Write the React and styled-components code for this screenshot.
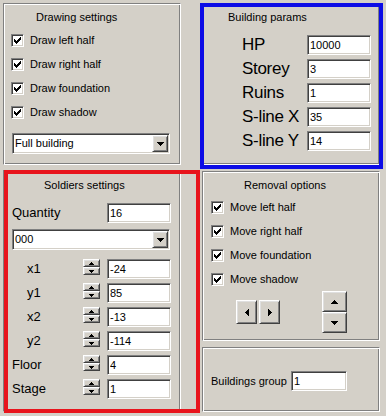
import styled, { createGlobalStyle } from "styled-components";

const GlobalStyle = createGlobalStyle`
  html, body {
    margin: 0;
    background: #d4d0c8;
  }
  body {
    font-family: "Liberation Sans", Arial, sans-serif;
    font-size: 11px;
    color: #000;
  }
`;

// pixel check mark, 7x7 like the classic one
const checkCols = [[0, 2], [1, 3], [2, 4], [3, 3], [4, 2], [5, 1], [6, 0]];

const CheckMark = () => (
  <svg width="7" height="7" viewBox="0 0 7 7" shapeRendering="crispEdges">
    <path d={checkCols.map(([x, y]) => `M${x} ${y}h1v3h-1z`).join("")} fill="#000" />
  </svg>
);

const Arrow = ({ size = 7, dir = "down" }) => {
  const rows = (size + 1) / 2;
  const vertical = dir === "up" || dir === "down";
  const d = Array.from({ length: rows }, (_, i) => {
    const len = size - 2 * i;
    if (dir === "down") return `M${i} ${i}h${len}v1h-${len}z`;
    if (dir === "up") return `M${i} ${rows - 1 - i}h${len}v1h-${len}z`;
    if (dir === "right") return `M${i} ${i}v${len}h1v-${len}z`;
    return `M${rows - 1 - i} ${i}v${len}h1v-${len}z`;
  }).join("");
  const w = vertical ? size : rows;
  const h = vertical ? rows : size;
  return (
    <svg width={w} height={h} viewBox={`0 0 ${w} ${h}`} shapeRendering="crispEdges">
      <path d={d} fill="#000" />
    </svg>
  );
};

const Window = styled.div`
  width: 386px;
  height: 416px;
  box-sizing: border-box;
  padding: 3px 0 0 3px;
  display: grid;
  grid-template-columns: 178px 178px;
  column-gap: 21px;
  align-items: start;
  overflow: hidden;
`;

const Column = styled.div`
  display: flex;
  flex-direction: column;
  gap: ${(p) => p.$gap}px;
`;

const Panel = styled.div`
  position: relative;
  box-sizing: border-box;
  height: ${(p) => p.$h}px;
  border: 1px solid;
  border-color: #808080 #fff #fff #808080;
  box-shadow: inset 1px 1px #fff, inset -1px -1px #808080;
  padding: ${(p) => p.$top}px 0 0 8px;
  display: flex;
  flex-direction: column;
  align-items: flex-start;
`;

const Highlight = styled.div`
  position: absolute;
  pointer-events: none;
  box-sizing: border-box;
  left: ${(p) => p.$x}px;
  top: ${(p) => p.$y}px;
  width: ${(p) => p.$w}px;
  height: ${(p) => p.$h}px;
  border: 4px solid ${(p) => p.$color};
`;

const Title = styled.div`
  margin-left: ${(p) => p.$x - 9}px;
  font-size: 11px;
  line-height: 13px;
  white-space: nowrap;
`;

const CheckList = styled.div`
  margin-top: ${(p) => p.$mt}px;
  margin-left: ${(p) => p.$ml}px;
  display: flex;
  flex-direction: column;
  gap: 11px;
`;

const CheckRow = styled.label`
  display: flex;
  align-items: center;
  gap: 6px;
  height: 13px;
  line-height: 13px;
  white-space: nowrap;

  span {
    position: relative;
    top: -1px;
  }
`;

const CheckBox = styled.span`
  box-sizing: border-box;
  width: 13px;
  height: 13px;
  flex: none;
  background: #fff;
  border: 1px solid;
  border-color: #808080 #fff #fff #808080;
  box-shadow: inset 1px 1px #404040, inset -1px -1px #d4d0c8;
  display: flex;
  align-items: center;
  justify-content: center;
`;

const Combo = styled.div`
  margin-top: ${(p) => p.$mt}px;
  box-sizing: border-box;
  width: 158px;
  height: 21px;
  padding: 1px;
  background: #fff;
  border: 1px solid;
  border-color: #808080 #fff #fff #808080;
  box-shadow: inset 1px 1px #404040, inset -1px -1px #d4d0c8;
  display: flex;
`;

const ComboText = styled.div`
  flex: 1;
  padding-left: 1px;
  line-height: 17px;
  font-size: 11px;
`;

const RaisedButton = styled.div`
  box-sizing: border-box;
  width: ${(p) => p.$w}px;
  height: ${(p) => p.$h}px;
  flex: none;
  background: #d4d0c8;
  border: 1px solid;
  border-color: #fff #404040 #404040 #fff;
  box-shadow: inset 1px 1px #dfdfdf, inset -1px -1px #808080;
  display: flex;
  align-items: center;
  justify-content: center;
`;

const FieldGrid = styled.div`
  margin-top: ${(p) => p.$mt}px;
  margin-left: ${(p) => p.$ml || 0}px;
  display: grid;
  grid-template-columns: ${(p) => p.$cols};
  grid-auto-rows: 20px;
  column-gap: ${(p) => p.$colGap}px;
  row-gap: 4px;
`;

const FormLabel = styled.div`
  grid-column: ${(p) => (p.$span ? "span 2" : "auto")};
  padding-left: ${(p) => (p.$indent ? 15 : 0)}px;
  font-size: 13px;
  line-height: 20px;
  white-space: nowrap;
`;

const BigLabel = styled.div`
  font-size: 17px;
  letter-spacing: -0.3px;
  line-height: 20px;
  white-space: nowrap;
`;

const Field = styled.input`
  box-sizing: border-box;
  width: ${(p) => p.$w || 64}px;
  height: 20px;
  margin: 0;
  padding: 0 2px;
  background: #fff;
  border: 1px solid;
  border-color: #808080 #fff #fff #808080;
  box-shadow: inset 1px 1px #404040, inset -1px -1px #d4d0c8;
  font-family: "Liberation Sans", Arial, sans-serif;
  font-size: 11px;
  color: #000;
  outline: none;
`;

const Spin = styled.div`
  align-self: start;
  width: 17px;
  height: 16px;
  display: flex;
  flex-direction: column;
`;

const NavArea = styled.div`
  margin-top: 4px;
  display: flex;
  align-items: center;
`;

const ArrowPair = styled.div`
  margin-left: 25px;
  display: flex;
  gap: 2px;
`;

const UpDown = styled.div`
  margin-left: 42px;
  display: flex;
  flex-direction: column;
`;

const GroupRow = styled.div`
  display: flex;
  align-items: center;

  span {
    width: 80px;
    white-space: nowrap;
  }
`;

const drawChecks = ["Draw left half", "Draw right half", "Draw foundation", "Draw shadow"];
const moveChecks = ["Move left half", "Move right half", "Move foundation", "Move shadow"];

const buildingParams = [
  ["HP", "10000"],
  ["Storey", "3"],
  ["Ruins", "1"],
  ["S-line X", "35"],
  ["S-line Y", "14"],
];

const soldierRows = [
  ["x1", "-24", true],
  ["y1", "85", true],
  ["x2", "-13", true],
  ["y2", "-114", true],
  ["Floor", "4", false],
  ["Stage", "1", false],
];

const Checks = ({ items, mt, ml }) => (
  <CheckList $mt={mt} $ml={ml}>
    {items.map((t) => (
      <CheckRow key={t}>
        <CheckBox>
          <CheckMark />
        </CheckBox>
        <span>{t}</span>
      </CheckRow>
    ))}
  </CheckList>
);

const DropDown = ({ mt, children }) => (
  <Combo $mt={mt}>
    <ComboText>{children}</ComboText>
    <RaisedButton $w={16} $h={17}>
      <Arrow size={7} dir="down" />
    </RaisedButton>
  </Combo>
);

const soldierCols = "64px 17px 64px";

export default function App() {
  return (
    <>
      <GlobalStyle />
      <Window>
        <Column $gap={5}>
          <Panel $h={162} $top={7}>
            <Title $x={33}>Drawing settings</Title>
            <Checks items={drawChecks} mt={11} ml={-1} />
            <DropDown mt={13}>Full building</DropDown>
          </Panel>

          <Panel $h={242} $top={8}>
            <Title $x={41}>Soldiers settings</Title>
            <FieldGrid $mt={11} $cols={soldierCols} $colGap={7}>
              <FormLabel $span>Quantity</FormLabel>
              <Field readOnly value="16" />
            </FieldGrid>
            <DropDown mt={6}>000</DropDown>
            <FieldGrid $mt={9} $cols={soldierCols} $colGap={7}>
              {soldierRows.map(([label, value, indent]) => (
                <>
                  <FormLabel key={label} $indent={indent}>
                    {label}
                  </FormLabel>
                  <Spin>
                    <RaisedButton $w={17} $h={8}>
                      <Arrow size={5} dir="up" />
                    </RaisedButton>
                    <RaisedButton $w={17} $h={8}>
                      <Arrow size={5} dir="down" />
                    </RaisedButton>
                  </Spin>
                  <Field readOnly value={value} />
                </>
              ))}
            </FieldGrid>
            <Highlight $color="#e8141c" $x={0} $y={-1} $w={196} $h={243} />
          </Panel>
        </Column>

        <Column $gap={6}>
          <Panel $h={162} $top={7}>
            <Title $x={26}>Building params</Title>
            <FieldGrid $mt={11} $ml={31} $cols="65px 64px" $colGap={0}>
              {buildingParams.map(([label, value]) => (
                <>
                  <BigLabel key={label}>{label}</BigLabel>
                  <Field readOnly value={value} />
                </>
              ))}
            </FieldGrid>
            <Highlight $color="#0c0ce6" $x={-3} $y={-1} $w={183} $h={166} />
          </Panel>

          <Panel $h={170} $top={7}>
            <Title $x={42}>Removal options</Title>
            <Checks items={moveChecks} mt={10} ml={0} />
            <NavArea>
              <ArrowPair>
                <RaisedButton $w={21} $h={24}>
                  <Arrow size={7} dir="left" />
                </RaisedButton>
                <RaisedButton $w={21} $h={24}>
                  <Arrow size={7} dir="right" />
                </RaisedButton>
              </ArrowPair>
              <UpDown>
                <RaisedButton $w={25} $h={21}>
                  <Arrow size={7} dir="up" />
                </RaisedButton>
                <RaisedButton $w={25} $h={21}>
                  <Arrow size={7} dir="down" />
                </RaisedButton>
              </UpDown>
            </NavArea>
          </Panel>

          <Panel $h={65} $top={23}>
            <GroupRow>
              <span>Buildings group</span>
              <Field readOnly value="1" $w={56} />
            </GroupRow>
          </Panel>
        </Column>
      </Window>
    </>
  );
}
